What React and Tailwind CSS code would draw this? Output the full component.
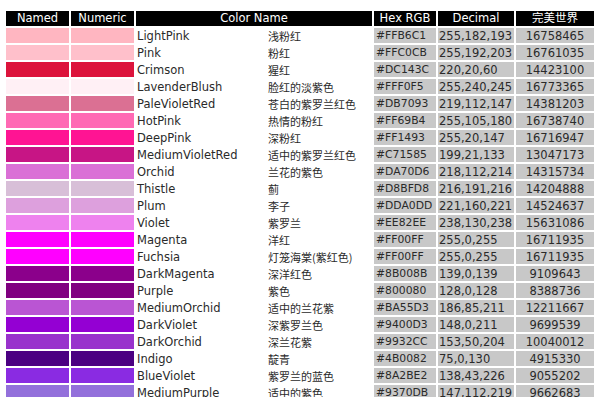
const COLORS = [
  ['LightPink', '浅粉红', '#FFB6C1', '255,182,193', '16758465'],
  ['Pink', '粉红', '#FFC0CB', '255,192,203', '16761035'],
  ['Crimson', '猩红', '#DC143C', '220,20,60', '14423100'],
  ['LavenderBlush', '脸红的淡紫色', '#FFF0F5', '255,240,245', '16773365'],
  ['PaleVioletRed', '苍白的紫罗兰红色', '#DB7093', '219,112,147', '14381203'],
  ['HotPink', '热情的粉红', '#FF69B4', '255,105,180', '16738740'],
  ['DeepPink', '深粉红', '#FF1493', '255,20,147', '16716947'],
  ['MediumVioletRed', '适中的紫罗兰红色', '#C71585', '199,21,133', '13047173'],
  ['Orchid', '兰花的紫色', '#DA70D6', '218,112,214', '14315734'],
  ['Thistle', '蓟', '#D8BFD8', '216,191,216', '14204888'],
  ['Plum', '李子', '#DDA0DD', '221,160,221', '14524637'],
  ['Violet', '紫罗兰', '#EE82EE', '238,130,238', '15631086'],
  ['Magenta', '洋红', '#FF00FF', '255,0,255', '16711935'],
  ['Fuchsia', '灯笼海棠(紫红色)', '#FF00FF', '255,0,255', '16711935'],
  ['DarkMagenta', '深洋红色', '#8B008B', '139,0,139', '9109643'],
  ['Purple', '紫色', '#800080', '128,0,128', '8388736'],
  ['MediumOrchid', '适中的兰花紫', '#BA55D3', '186,85,211', '12211667'],
  ['DarkViolet', '深紫罗兰色', '#9400D3', '148,0,211', '9699539'],
  ['DarkOrchid', '深兰花紫', '#9932CC', '153,50,204', '10040012'],
  ['Indigo', '靛青', '#4B0082', '75,0,130', '4915330'],
  ['BlueViolet', '紫罗兰的蓝色', '#8A2BE2', '138,43,226', '9055202'],
  ['MediumPurple', '适中的紫色', '#9370DB', '147,112,219', '9662683'],
];

const HEADERS = ['Named', 'Numeric', 'Color Name', 'Hex RGB', 'Decimal', '完美世界'];

export default function App() {
  return (
    <div className="w-[600px] h-[397px] overflow-hidden bg-white pt-[11px] pl-[6px] font-['DejaVu_Sans','Noto_Sans_CJK_SC',sans-serif] text-[11.5px] text-[#2a2a2a]">
      <div className="grid grid-cols-[63px_63px_236px_62px_76px_78px] gap-[2px] auto-rows-[15px]">
        {HEADERS.map((h) => (
          <div key={h} className="bg-black text-white text-center leading-[15px]">
            {h}
          </div>
        ))}
        {COLORS.map(([name, cn, hex, dec, num]) => (
          <Row key={name} name={name} cn={cn} hex={hex} dec={dec} num={num} />
        ))}
      </div>
    </div>
  );
}

function Row({ name, cn, hex, dec, num }) {
  return (
    <>
      <div style={{ backgroundColor: hex }} />
      <div style={{ backgroundColor: hex }} />
      <div className="flex leading-[16px] whitespace-nowrap">
        <span className="w-[132px] pl-[1px]">{name}</span>
        <span className="font-['Noto_Sans_CJK_SC',sans-serif] text-[11px]">{cn}</span>
      </div>
      <div className="bg-[#c8c8c8] pl-[2px] leading-[16px] text-[10.8px] whitespace-nowrap">{hex}</div>
      <div className="bg-[#c8c8c8] pl-[1px] leading-[16px] whitespace-nowrap">{dec}</div>
      <div className="bg-[#c8c8c8] text-center leading-[16px]">{num}</div>
    </>
  );
}
